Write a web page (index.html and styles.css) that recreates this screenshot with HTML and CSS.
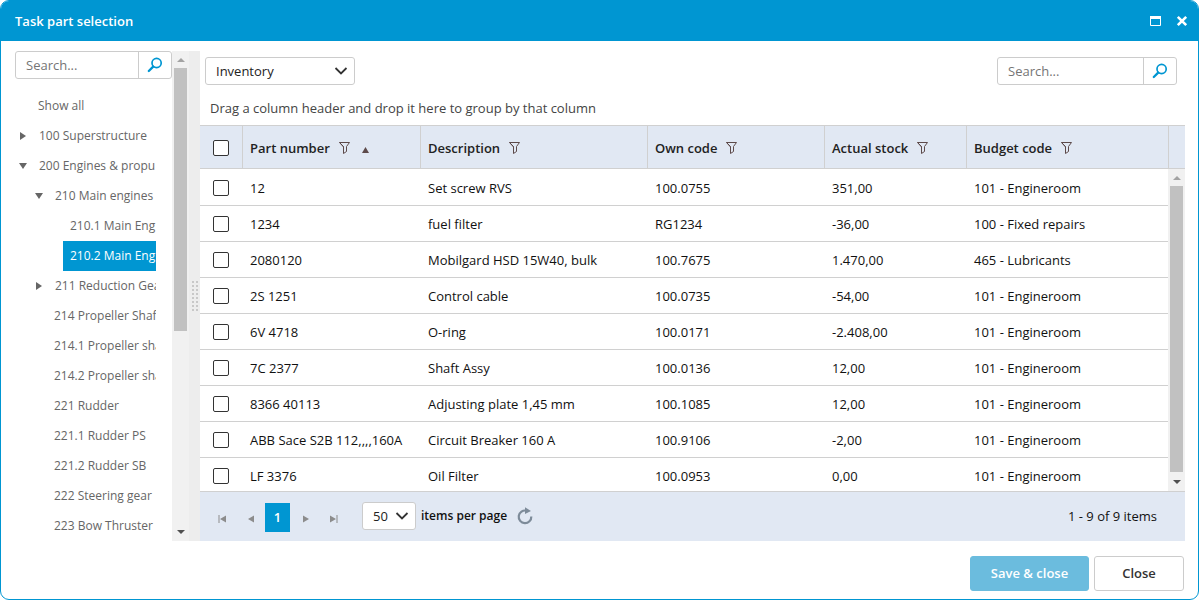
FILE: index.html
```
<!DOCTYPE html>
<html lang="en">
<head>
<meta charset="utf-8">
<title>Task part selection</title>
<link rel="stylesheet" href="styles.css">
</head>
<body>
<svg class="defs" aria-hidden="true">
  <symbol id="i-search" viewBox="0 0 16 16"><circle cx="9.6" cy="6" r="4.6" fill="none" stroke="currentColor" stroke-width="1.7"/><path d="M6.2 9.6 1.8 14" fill="none" stroke="currentColor" stroke-width="2.3" stroke-linecap="round"/></symbol>
  <symbol id="i-filter" viewBox="0 0 12 14"><path d="M.5 1.500h10L7.500 5.500v5L4.500 12.500v-7zM.5 1.500 4.500 6" fill="none" stroke="currentColor"/></symbol>
  <symbol id="i-chevron" viewBox="0 0 14 10"><path d="M1.500 2 7 7.400 12.500 2" fill="none" stroke="currentColor" stroke-width="1.800"/></symbol>
  <symbol id="i-right" viewBox="0 0 8 8"><path d="M1 0l6 4-6 4z" fill="currentColor"/></symbol>
  <symbol id="i-left" viewBox="0 0 8 8"><path d="M8 .5v7L2 4z" fill="currentColor"/></symbol>
  <symbol id="i-next" viewBox="0 0 8 8"><path d="M1 .5v7L7 4z" fill="currentColor"/></symbol>
  <symbol id="i-first" viewBox="0 0 8 8"><path d="M.5 0v8h1V0zM8 .5v7L2 4z" fill="currentColor"/></symbol>
  <symbol id="i-last" viewBox="0 0 8 8"><path d="M7.500 0v8h-1V0zM0 .5v7L6 4z" fill="currentColor"/></symbol>
  <symbol id="i-down" viewBox="0 0 8 8"><path d="M0 1h8L4 7z" fill="currentColor"/></symbol>
</svg>
<main class="window">
  <header class="titlebar">
    <h1 class="title">Task part selection</h1>
    <button class="title-btn" type="button" aria-label="Maximize"><svg width="11" height="10" viewBox="0 0 11 10"><path d="M.5.5h10v9H.5z" fill="none" stroke="currentColor"/><path d="M0 0h11v3H0z" fill="currentColor"/></svg></button>
    <button class="title-btn" type="button" aria-label="Close window"><svg width="12" height="12" viewBox="0 0 12 12"><path d="M1.800 1.800l8.400 8.400M10.200 1.800l-8.400 8.400" stroke="currentColor" stroke-width="2.600"/></svg></button>
  </header>

  <div class="content">
    <aside class="side">
      <div class="side-body">
        <form class="search">
          <input class="search-input" type="text" placeholder="Search..." aria-label="Search components">
          <button class="search-btn" type="button" aria-label="Search components"><svg width="16" height="16"><use href="#i-search"/></svg></button>
        </form>
        <ul class="tree">
          <li><div class="node"><span class="toggle"></span><a class="label" href="#">Show all</a></div></li>
          <li><div class="node"><span class="toggle"><svg width="8" height="8"><use href="#i-right"/></svg></span><a class="label parent" href="#">100 Superstructure</a></div></li>
          <li><div class="node"><span class="toggle"><svg width="8" height="8"><use href="#i-down"/></svg></span><a class="label parent" href="#">200 Engines &amp; propu</a></div>
            <ul class="branch">
              <li><div class="node"><span class="toggle"><svg width="8" height="8"><use href="#i-down"/></svg></span><a class="label parent" href="#">210 Main engines</a></div>
                <ul class="branch">
                  <li><div class="node"><span class="toggle"></span><a class="label" href="#">210.1 Main Eng</a></div></li>
                  <li><div class="node"><span class="toggle"></span><a class="label selected" href="#">210.2 Main Eng</a></div></li>
                </ul>
              </li>
              <li><div class="node"><span class="toggle"><svg width="8" height="8"><use href="#i-right"/></svg></span><a class="label parent" href="#">211 Reduction Gea</a></div></li>
              <li><div class="node"><span class="toggle"></span><a class="label" href="#">214 Propeller Shaf</a></div></li>
              <li><div class="node"><span class="toggle"></span><a class="label" href="#">214.1 Propeller sha</a></div></li>
              <li><div class="node"><span class="toggle"></span><a class="label" href="#">214.2 Propeller sha</a></div></li>
              <li><div class="node"><span class="toggle"></span><a class="label" href="#">221 Rudder</a></div></li>
              <li><div class="node"><span class="toggle"></span><a class="label" href="#">221.1 Rudder PS</a></div></li>
              <li><div class="node"><span class="toggle"></span><a class="label" href="#">221.2 Rudder SB</a></div></li>
              <li><div class="node"><span class="toggle"></span><a class="label" href="#">222 Steering gear</a></div></li>
              <li><div class="node"><span class="toggle"></span><a class="label" href="#">223 Bow Thruster</a></div></li>
            </ul>
          </li>
        </ul>
      </div>
      <div class="scrollbar"><i class="arrow up"></i><div class="track"><div class="thumb thumb-side"></div></div><i class="arrow down"></i></div>
    </aside>
    <div class="splitter"><svg width="6" height="31" viewBox="0 0 6 31"><path d="M1 0v31M5 0v31" stroke="#c8c8c8" stroke-width="2" stroke-dasharray="2 2"/></svg></div>

    <section class="main">
      <div class="toolbar">
        <div class="select-box source">
          <select class="select" aria-label="Source"><option>Inventory</option></select>
          <svg class="chevron" width="14" height="10"><use href="#i-chevron"/></svg>
        </div>
        <form class="search search-main">
          <input class="search-input" type="text" placeholder="Search..." aria-label="Search parts">
          <button class="search-btn" type="button" aria-label="Search parts"><svg width="16" height="16"><use href="#i-search"/></svg></button>
        </form>
      </div>
      <p class="group-hint">Drag a column header and drop it here to group by that column</p>
      <table class="grid grid-head">
        <colgroup><col class="c-check"><col class="c-part"><col class="c-desc"><col class="c-own"><col class="c-stock"><col><col class="c-scroll"></colgroup>
        <thead><tr>
          <th class="check"><input class="tick" type="checkbox" aria-label="Select all"></th>
          <th>Part number<svg class="filter" width="12" height="14"><use href="#i-filter"/></svg><svg class="sort" width="7" height="6" viewBox="0 0 7 6"><path d="M3.500 0 7 6H0z" fill="currentColor"/></svg></th>
          <th>Description<svg class="filter" width="12" height="14"><use href="#i-filter"/></svg></th>
          <th>Own code<svg class="filter" width="12" height="14"><use href="#i-filter"/></svg></th>
          <th>Actual stock<svg class="filter" width="12" height="14"><use href="#i-filter"/></svg></th>
          <th>Budget code<svg class="filter" width="12" height="14"><use href="#i-filter"/></svg></th>
          <td></td>
        </tr></thead>
      </table>
      <div class="grid-body">
        <div class="rows">
          <table class="grid">
            <colgroup><col class="c-check"><col class="c-part"><col class="c-desc"><col class="c-own"><col class="c-stock"><col></colgroup>
            <tbody>
              <tr><td class="check"><input class="tick" type="checkbox" aria-label="Select 12"></td><td>12</td><td>Set screw RVS</td><td>100.0755</td><td>351,00</td><td>101 - Engineroom</td></tr>
              <tr><td class="check"><input class="tick" type="checkbox" aria-label="Select 1234"></td><td>1234</td><td>fuel filter</td><td>RG1234</td><td>-36,00</td><td>100 - Fixed repairs</td></tr>
              <tr><td class="check"><input class="tick" type="checkbox" aria-label="Select 2080120"></td><td>2080120</td><td>Mobilgard HSD 15W40, bulk</td><td>100.7675</td><td>1.470,00</td><td>465 - Lubricants</td></tr>
              <tr><td class="check"><input class="tick" type="checkbox" aria-label="Select 2S 1251"></td><td>2S 1251</td><td>Control cable</td><td>100.0735</td><td>-54,00</td><td>101 - Engineroom</td></tr>
              <tr><td class="check"><input class="tick" type="checkbox" aria-label="Select 6V 4718"></td><td>6V 4718</td><td>O-ring</td><td>100.0171</td><td>-2.408,00</td><td>101 - Engineroom</td></tr>
              <tr><td class="check"><input class="tick" type="checkbox" aria-label="Select 7C 2377"></td><td>7C 2377</td><td>Shaft Assy</td><td>100.0136</td><td>12,00</td><td>101 - Engineroom</td></tr>
              <tr><td class="check"><input class="tick" type="checkbox" aria-label="Select 8366 40113"></td><td>8366 40113</td><td>Adjusting plate 1,45 mm</td><td>100.1085</td><td>12,00</td><td>101 - Engineroom</td></tr>
              <tr><td class="check"><input class="tick" type="checkbox" aria-label="Select ABB Sace S2B"></td><td>ABB Sace S2B 112,,,,160A</td><td>Circuit Breaker 160 A</td><td>100.9106</td><td>-2,00</td><td>101 - Engineroom</td></tr>
              <tr><td class="check"><input class="tick" type="checkbox" aria-label="Select LF 3376"></td><td>LF 3376</td><td>Oil Filter</td><td>100.0953</td><td>0,00</td><td>101 - Engineroom</td></tr>
            </tbody>
          </table>
        </div>
        <div class="scrollbar"><i class="arrow up"></i><div class="track"><div class="thumb"></div></div><i class="arrow down"></i></div>
      </div>
      <nav class="pager" aria-label="Pages">
        <button class="page-btn" type="button" aria-label="First page"><svg width="8" height="8"><use href="#i-first"/></svg></button>
        <button class="page-btn" type="button" aria-label="Previous page"><svg width="8" height="8"><use href="#i-left"/></svg></button>
        <button class="page-btn current" type="button">1</button>
        <button class="page-btn" type="button" aria-label="Next page"><svg width="8" height="8"><use href="#i-next"/></svg></button>
        <button class="page-btn" type="button" aria-label="Last page"><svg width="8" height="8"><use href="#i-last"/></svg></button>
        <div class="select-box size">
          <select class="select" id="page-size"><option>50</option></select>
          <svg class="chevron" width="14" height="10"><use href="#i-chevron"/></svg>
        </div>
        <label class="size-label" for="page-size">items per page</label>
        <button class="refresh" type="button" aria-label="Refresh"><svg width="16" height="18" viewBox="0 0 16 18"><path d="M9.500 3.700A6.300 6.300 0 1 0 14.300 9.500" fill="none" stroke="currentColor" stroke-width="2.200"/><path d="M8 .3 14 4 8 7z" fill="currentColor"/></svg></button>
        <span class="count">1 - 9 of 9 items</span>
      </nav>
    </section>
  </div>

  <footer class="actions">
    <button class="btn primary" type="button" disabled>Save &amp; close</button>
    <button class="btn" type="button">Close</button>
  </footer>
</main>
</body>
</html>
```
FILE: styles.css
```
* { box-sizing: border-box; }
body { margin: 0; background: #fff; color: #111; font: 13px/18px "Open Sans", "Noto Sans", sans-serif; }
button, input, select { font: inherit; color: inherit; margin: 0; }
button { display: flex; align-items: center; justify-content: center; padding: 0; border: 0; background: none; }
svg { display: block; flex: none; }
.defs { display: none; }

.window { display: flex; flex-direction: column; height: 100vh; border: 1px solid #0096d2; border-radius: 9px; overflow: hidden; }
.titlebar { display: flex; align-items: center; gap: 15px; flex: none; height: 40px; padding: 0 10px 0 14px; background: #0096d2; color: #fff; }
.title { flex: 1; margin: 0; font-size: 13px; font-weight: 600; }

.content { flex: 1; min-height: 0; display: flex; padding: 10px 13px 0 14px; }
.side { display: flex; flex: none; width: 174px; }
.side-body { flex: 1; min-width: 0; overflow: hidden; }
.search { display: flex; height: 28px; border: 1px solid #ccc; border-radius: 3px; }
.search-main { width: 180px; }
.search-input { flex: 1; min-width: 0; padding: 0 10px; border: 0; background: none; outline: 0; }
.search-input::placeholder { color: #757575; opacity: 1; }
.search-btn { width: 33px; border-left: 1px solid #ccc; color: #0096d2; }

.tree, .branch { list-style: none; margin: 0; padding: 0; }
.tree { margin: 12px 16px 0 0; color: #666; font-size: 12px; }
.branch { padding-left: 16px; }
.node { display: flex; height: 30px; line-height: 29px; }
.toggle { display: flex; align-items: center; justify-content: center; flex: none; width: 16px; }
.label { flex: 1; min-width: 0; padding-left: 7px; overflow: hidden; white-space: nowrap; color: inherit; text-decoration: none; }
.parent { padding-left: 8px; }
.selected { background: #0096d2; color: #fff; }

.scrollbar { display: flex; flex-direction: column; flex: none; width: 17px; background: #f1f1f1; }
.arrow { height: 17px; display: flex; align-items: center; justify-content: center; }
.arrow::before { content: ""; border: 4px solid transparent; }
.up::before { border-top: 0; border-bottom-color: #a3a3a3; }
.down { height: 19px; }
.down::before { border-bottom: 0; border-top-color: #505050; }
.track { flex: 1; padding: 0 2px; }
.thumb { height: 100%; background: #c1c1c1; }
.thumb-side { height: 58%; }
.splitter { display: flex; align-items: center; justify-content: center; flex: none; width: 11px; background: #ededed; }

.main { flex: 1; min-width: 0; display: flex; flex-direction: column; }
.toolbar { display: flex; justify-content: space-between; padding: 6px 8px 0 5px; }
.select-box { position: relative; height: 28px; }
.source { width: 150px; }
.select { appearance: none; width: 100%; height: 100%; padding: 0 10px; border: 1px solid #ccc; border-radius: 3px; background: #fff; color: #222; }
.chevron { position: absolute; right: 7px; top: 9px; color: #333; pointer-events: none; }
.group-hint { margin: 0; padding: 14px 10px 8px; color: #444; }

.grid { width: 100%; table-layout: fixed; border-collapse: separate; border-spacing: 0; }
.c-check { width: 42px; }
.c-part { width: 178px; }
.c-desc { width: 227px; }
.c-own { width: 177px; }
.c-stock { width: 142px; }
.c-scroll { width: 17px; }
.grid th, .grid td { padding: 0 0 0 8px; text-align: left; white-space: nowrap; overflow: hidden; }
.grid .check { padding-left: 13px; }
.grid-head th, .grid-head td { height: 44px; background: #e1e8f3; border: 1px solid #d0d0d0; border-width: 1px 0 1px 1px; font-weight: 600; color: #222; }
.grid.grid-head th { padding: 2px 0 0 7px; }
.grid.grid-head .check { padding-left: 13px; border-left: 0; }
.grid tbody td { height: 36px; border-bottom: 1px solid #d0d0d0; }
.filter { display: inline-block; margin-left: 9px; vertical-align: -2px; color: #5d4a4a; }
.sort { display: inline-block; margin-left: 11px; vertical-align: 0; color: #5d4a4a; }
.tick { display: block; appearance: none; width: 16px; height: 16px; border: 1px solid #333; border-radius: 2px; background: #fff; }
.tick:checked { background: #0096d2; }
.grid-body { flex: 1; min-height: 0; display: flex; }
.rows { flex: 1; min-width: 0; overflow: hidden; padding-top: 1px; }

.pager { display: flex; align-items: center; flex: none; height: 50px; padding: 0 28px 1px 8px; background: #e1e8f3; border-top: 1px solid #d0d0d0; }
.page-btn { width: 28px; height: 29px; padding-top: 5px; color: #8c8c8c; }
.current { width: 25px; margin: 2px 2px 0 1px; padding: 0; background: #0096d2; color: #fff; font-weight: 600; }
.size { width: 54px; margin: 0 5px 0 14px; }
.size-label { font-size: 12px; font-weight: 600; }
.refresh { margin-left: 10px; color: #7d8b99; }
.count { margin-left: auto; }

.actions { display: flex; justify-content: flex-end; gap: 5px; flex: none; padding: 15px 14px 8px; }
.btn { height: 35px; width: 90px; padding-bottom: 2px; border: 1px solid #ccc; border-radius: 3px; color: #333; font-weight: 600; background: #fff; }
.primary { width: 119px; border-color: #6bbcde; background: #6bbcde; color: #fff; }
```
